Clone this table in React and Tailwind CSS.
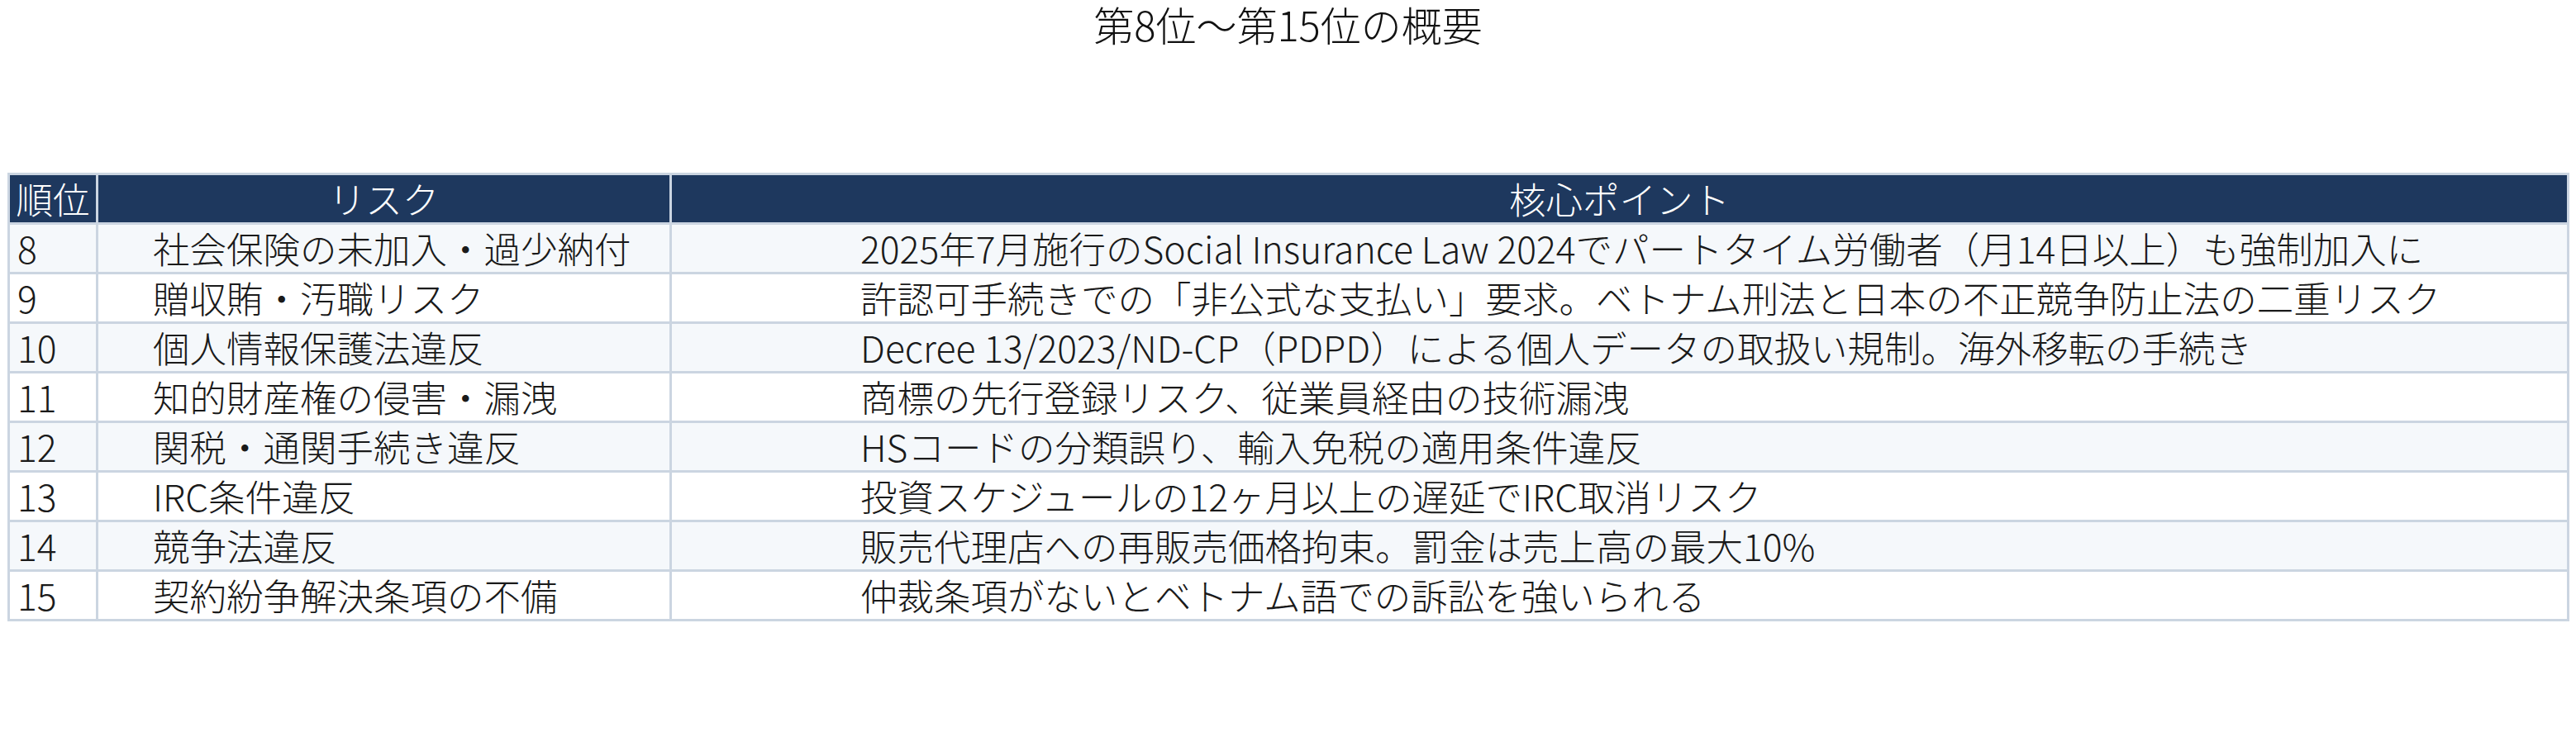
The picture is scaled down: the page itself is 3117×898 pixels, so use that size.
import React from "react";

const rows = [
  ["8", "社会保険の未加入・過少納付", "2025年7月施行のSocial Insurance Law 2024でパートタイム労働者（月14日以上）も強制加入に"],
  ["9", "贈収賄・汚職リスク", "許認可手続きでの「非公式な支払い」要求。ベトナム刑法と日本の不正競争防止法の二重リスク"],
  ["10", "個人情報保護法違反", "Decree 13/2023/ND-CP（PDPD）による個人データの取扱い規制。海外移転の手続き"],
  ["11", "知的財産権の侵害・漏洩", "商標の先行登録リスク、従業員経由の技術漏洩"],
  ["12", "関税・通関手続き違反", "HSコードの分類誤り、輸入免税の適用条件違反"],
  ["13", "IRC条件違反", "投資スケジュールの12ヶ月以上の遅延でIRC取消リスク"],
  ["14", "競争法違反", "販売代理店への再販売価格拘束。罰金は売上高の最大10%"],
  ["15", "契約紛争解決条項の不備", "仲裁条項がないとベトナム語での訴訟を強いられる"],
];

export default function App() {
  return (
    <div
      className="w-[3117px] h-[898px] bg-white text-[#1a1a1a]"
      style={{ fontFamily: '"Noto Sans CJK JP", "Noto Sans", sans-serif' }}
    >
      <div className="h-[209px] pt-[2px]">
        <h1 className="text-center text-[49px] font-extralight leading-[54px] text-[#111]">
          第8位〜第15位の概要
        </h1>
      </div>
      <div className="ml-[9px] w-[3100px] border-[3px] border-[#cbd5e1] font-extralight text-[44.5px]">
        <div className="grid grid-cols-[104px_694px_1fr] h-[57px] bg-[#1e385e] text-white">
          <div className="flex items-center justify-center leading-none">順位</div>
          <div className="flex items-center justify-center leading-none border-l-[3px] border-[#cbd5e1]">リスク</div>
          <div className="flex items-center justify-center leading-none border-l-[3px] border-[#cbd5e1]">核心ポイント</div>
        </div>
        {rows.map((r, i) => (
          <div
            key={r[0]}
            className={`grid grid-cols-[104px_694px_1fr] h-[60px] border-t-[3px] border-[#cbd5e1] ${i % 2 === 0 ? "bg-[#f5f8fb]" : "bg-white"}`}
          >
            <div className="flex items-center pl-[9px] leading-none whitespace-nowrap">{r[0]}</div>
            <div className="flex items-center pl-[66px] leading-none whitespace-nowrap border-l-[3px] border-[#cbd5e1]">{r[1]}</div>
            <div className="flex items-center pl-[228px] leading-none whitespace-nowrap border-l-[3px] border-[#cbd5e1]">{r[2]}</div>
          </div>
        ))}
      </div>
    </div>
  );
}
